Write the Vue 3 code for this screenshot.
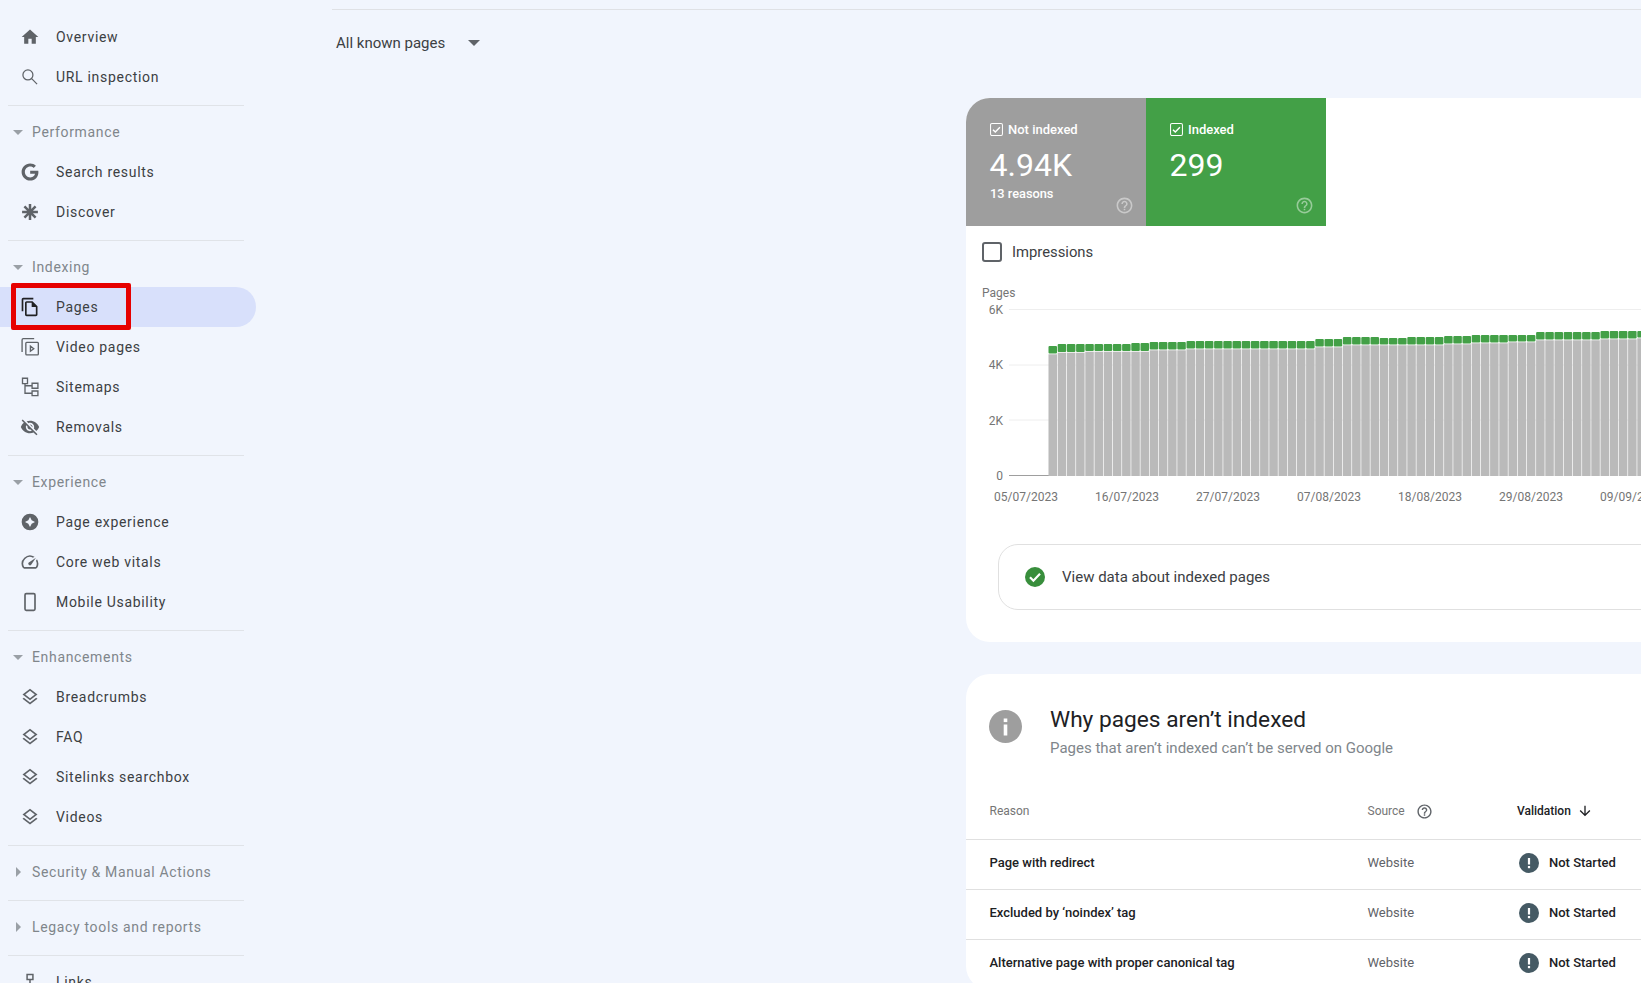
<script setup>
// icon paths, all on a 24x24 grid unless `box` says otherwise
const icons = {
  home: { d: 'M10 20v-6h4v6h5v-8h3L12 3 2 12h3v8z' },
  search: { stroke: 1.5, d: 'M9.500 3.500a6 6 0 1 0 0 12 6 6 0 0 0 0-12zM14 14l6.500 6.500' },
  google: { box: '-2 -2 28 28', d: 'M12.24 10.285V14.4h6.806c-.275 1.765-2.056 5.174-6.806 5.174-4.095 0-7.439-3.389-7.439-7.574s3.345-7.574 7.439-7.574c2.33 0 3.891.989 4.785 1.849l3.254-3.138C18.189 1.186 15.479 0 12.24 0c-6.635 0-12 5.365-12 12s5.365 12 12 12c6.926 0 11.52-4.869 11.52-11.726 0-.788-.085-1.39-.189-1.989H12.24z' },
  discover: { stroke: 3, d: 'M12 2.500v19M2.500 12h19M5.300 5.300l13.400 13.400M18.700 5.300L5.300 18.700' },
  pages: { d: 'M16 1H4c-1.1 0-2 .9-2 2v14h2V3h12V1zm-1 4H8c-1.1 0-1.99.9-1.99 2L6 21c0 1.1.89 2 1.99 2H19c1.1 0 2-.9 2-2V11l-6-6zM8 21V7h6v5h5v9H8z' },
  video: { stroke: 1.6, d: 'M17 2H4a1.500 1.500 0 0 0-1.500 1.500V18M8 6.500h13a1 1 0 0 1 1 1v13a1 1 0 0 1-1 1H8a1 1 0 0 1-1-1v-13a1 1 0 0 1 1-1zM12.500 11v6l4-3z' },
  sitemap: { stroke: 1.6, d: 'M3 1.500h6V8H3zM14.500 7.500h7v6h-7zM14.500 16.800h7v5.500h-7zM6 8v11.500h8.500M6 10.500h8.500' },
  removal: { d: 'M12 7c2.76 0 5 2.24 5 5 0 .65-.13 1.26-.36 1.83l2.92 2.92c1.51-1.26 2.7-2.89 3.43-4.75-1.73-4.39-6-7.5-11-7.5-1.4 0-2.74.25-3.98.7l2.16 2.16C10.74 7.13 11.35 7 12 7zM2 4.27l2.28 2.28.46.46C3.08 8.3 1.78 10.02 1 12c1.73 4.39 6 7.5 11 7.5 1.55 0 3.03-.3 4.38-.84l.42.42L19.73 22 21 20.73 3.27 3 2 4.27zM7.53 9.8l1.55 1.55c-.05.21-.08.43-.08.65 0 1.66 1.34 3 3 3 .22 0 .44-.03.65-.08l1.55 1.55c-.67.33-1.41.53-2.2.53-2.76 0-5-2.24-5-5 0-.79.2-1.53.53-2.2zm4.31-.78l3.15 3.15.02-.16c0-1.66-1.34-3-3-3l-.17.01z' },
  experience: { evenodd: true, d: 'M12 2a10 10 0 1 0 0 20 10 10 0 0 0 0-20zm0 4l2 4 4 2-4 2-2 4-2-4-4-2 4-2z' },
  vitals: { d: 'M20.38 8.57l-1.23 1.85a8 8 0 0 1-.22 7.58H5.07A8 8 0 0 1 15.58 6.85l1.85-1.23A10 10 0 0 0 3.35 19a2 2 0 0 0 1.72 1h13.85a2 2 0 0 0 1.74-1 10 10 0 0 0-.27-10.44zm-9.79 6.84a2 2 0 0 0 2.83 0l5.66-8.49-8.49 5.66a2 2 0 0 0 0 2.83z' },
  mobile: { stroke: 2, d: 'M7.500 2h9a1.500 1.500 0 0 1 1.500 1.500v17a1.500 1.500 0 0 1-1.500 1.500h-9A1.500 1.500 0 0 1 6 20.500v-17A1.500 1.500 0 0 1 7.500 2z' },
  layers: { d: 'M11.99 18.54l-7.37-5.73L3 14.07l9 7 9-7-1.63-1.27zM12 16l7.36-5.73L21 9l-9-7-9 7 1.63 1.27L12 16zm0-11.47L17.74 9 12 13.47 6.26 9 12 4.53z' },
  links: { stroke: 1.8, d: 'M8.500 3h7v6h-7zM12 9v8M8 15l4 3 4-3' },
}

const help = 'M11 18h2v-2h-2v2zm1-16C6.48 2 2 6.48 2 12s4.48 10 10 10 10-4.48 10-10S17.52 2 12 2zm0 18c-4.41 0-8-3.59-8-8s3.59-8 8-8 8 3.59 8 8-3.59 8-8 8zm0-14c-2.21 0-4 1.79-4 4h2c0-1.1.9-2 2-2s2 .9 2 2c0 2-3 1.75-3 5h2c0-2.25 3-2.5 3-5 0-2.21-1.79-4-4-4z'

const nav = [
  { items: [{ label: 'Overview', icon: 'home' }, { label: 'URL inspection', icon: 'search' }] },
  { title: 'Performance', open: true, items: [{ label: 'Search results', icon: 'google' }, { label: 'Discover', icon: 'discover' }] },
  {
    title: 'Indexing',
    open: true,
    items: [
      { label: 'Pages', icon: 'pages', active: true },
      { label: 'Video pages', icon: 'video' },
      { label: 'Sitemaps', icon: 'sitemap' },
      { label: 'Removals', icon: 'removal' },
    ],
  },
  {
    title: 'Experience',
    open: true,
    items: [
      { label: 'Page experience', icon: 'experience' },
      { label: 'Core web vitals', icon: 'vitals' },
      { label: 'Mobile Usability', icon: 'mobile' },
    ],
  },
  {
    title: 'Enhancements',
    open: true,
    items: [
      { label: 'Breadcrumbs', icon: 'layers' },
      { label: 'FAQ', icon: 'layers' },
      { label: 'Sitelinks searchbox', icon: 'layers' },
      { label: 'Videos', icon: 'layers' },
    ],
  },
  { title: 'Security & Manual Actions', items: [] },
  { title: 'Legacy tools and reports', items: [] },
  { items: [{ label: 'Links', icon: 'links' }] },
]

// chart: bar runs as [count, y of grey top, y of green top], in chart coordinates
const runs = [
  [1, 76.3, 68], [3, 74.7, 66], [5, 73.7, 66], [2, 73.7, 65], [4, 72.3, 64],
  [14, 71.3, 63], [3, 69.3, 61], [4, 67.3, 59], [3, 67.3, 60], [4, 67.3, 59],
  [3, 66.3, 58], [4, 65.3, 57], [3, 64.3, 57], [7, 62.3, 54], [4, 61.3, 53], [1, 60.3, 53],
]
const bars = []
for (const [count, grey, green] of runs) {
  for (let n = 0; n < count; n++) {
    bars.push({ x: 82.5 + bars.length * 9.2, grey, green })
  }
}
const yAxis = [
  { label: '6K', y: 31.5, text: 35.5 },
  { label: '4K', y: 87, text: 91 },
  { label: '2K', y: 142, text: 147 },
]
const dates = ['05/07/2023', '16/07/2023', '27/07/2023', '07/08/2023', '18/08/2023', '29/08/2023', '09/09/2023']

const rows = ['Page with redirect', "Excluded by ‘noindex’ tag", 'Alternative page with proper canonical tag']
</script>

<template>
  <div class="app">
    <aside class="sidebar">
      <section v-for="(group, g) in nav" :key="g" class="group">
        <div v-if="group.title" class="group-title">
          <span :class="group.open ? 'caret-down' : 'caret-right'"></span>
          {{ group.title }}
        </div>
        <a v-for="item in group.items" :key="item.label" class="item" :class="{ active: item.active }">
          <svg class="item-icon" :viewBox="icons[item.icon].box || '0 0 24 24'">
            <path
              :d="icons[item.icon].d"
              :fill="icons[item.icon].stroke ? 'none' : 'currentColor'"
              :stroke="icons[item.icon].stroke ? 'currentColor' : 'none'"
              :stroke-width="icons[item.icon].stroke"
              :fill-rule="icons[item.icon].evenodd ? 'evenodd' : 'nonzero'"
            />
          </svg>
          <span>{{ item.label }}</span>
          <i v-if="item.active" class="red-box"></i>
        </a>
      </section>
    </aside>

    <main class="main">
      <div class="top-line"></div>
      <div class="filter">
        <span>All known pages</span>
        <span class="filter-caret"></span>
      </div>

      <div class="card chart-card">
        <div class="tiles">
          <div class="tile grey">
            <div class="tile-label">
              <svg viewBox="0 0 14 14" class="tile-check">
                <rect x="0.6" y="0.6" width="12.800" height="12.800" rx="1.500" fill="none" stroke="#fff" stroke-width="1.100" />
                <path d="M3.200 7.200l2.500 2.500 5-5.200" fill="none" stroke="#fff" stroke-width="1.500" />
              </svg>
              Not indexed
            </div>
            <div class="tile-value">4.94K</div>
            <div class="tile-sub">13 reasons</div>
            <svg class="tile-help" viewBox="0 0 24 24"><path :d="help" fill="#fff" /></svg>
          </div>
          <div class="tile green">
            <div class="tile-label">
              <svg viewBox="0 0 14 14" class="tile-check">
                <rect x="0.6" y="0.6" width="12.800" height="12.800" rx="1.500" fill="none" stroke="#fff" stroke-width="1.100" />
                <path d="M3.200 7.200l2.500 2.500 5-5.200" fill="none" stroke="#fff" stroke-width="1.500" />
              </svg>
              Indexed
            </div>
            <div class="tile-value">299</div>
            <svg class="tile-help" viewBox="0 0 24 24"><path :d="help" fill="#fff" /></svg>
          </div>
        </div>

        <label class="impressions">
          <span class="box"></span>
          Impressions
        </label>

        <svg class="chart" width="700" height="235" viewBox="0 0 700 235">
          <text x="16" y="19" class="axis">Pages</text>
          <g v-for="tick in yAxis" :key="tick.label">
            <line x1="43" x2="700" :y1="tick.y" :y2="tick.y" stroke="#eeeeee" />
            <text x="37" :y="tick.text" text-anchor="end" class="axis">{{ tick.label }}</text>
          </g>
          <line x1="43" x2="83" y1="197.5" y2="197.5" stroke="#9e9e9e" />
          <text x="37" y="202" text-anchor="end" class="axis">0</text>
          <g v-for="bar in bars" :key="bar.x">
            <rect :x="bar.x" :y="bar.green" width="8.500" :height="bar.grey - bar.green - 0.7" rx="1" fill="#43a047" />
            <rect :x="bar.x" :y="bar.grey" width="8.500" :height="198 - bar.grey" fill="#bababa" />
          </g>
          <text v-for="(date, i) in dates" :key="date" :x="60 + i * 101" y="223" text-anchor="middle" class="axis">{{ date }}</text>
        </svg>

        <div class="view-data">
          <svg class="ok-icon" viewBox="0 0 20 20">
            <circle cx="10" cy="10" r="10" fill="#388e3c" />
            <path d="M5 10.300l3.400 3.400 6.600-7" fill="none" stroke="#fff" stroke-width="2.200" />
          </svg>
          <span>View data about indexed pages</span>
        </div>
      </div>

      <div class="card reasons-card">
        <div class="reasons-head">
          <svg class="info-icon" viewBox="0 0 33 33">
            <circle cx="16.500" cy="16.500" r="16.500" fill="#9e9e9e" />
            <rect x="14.700" y="14.500" width="3.600" height="11" fill="#fff" />
            <rect x="14.700" y="8.500" width="3.600" height="3.600" fill="#fff" />
          </svg>
          <div>
            <h2>Why pages aren’t indexed</h2>
            <p>Pages that aren’t indexed can’t be served on Google</p>
          </div>
        </div>

        <div class="row head">
          <span>Reason</span>
          <span class="source">
            Source
            <svg viewBox="0 0 24 24" class="source-help"><path :d="help" fill="#5f6368" /></svg>
          </span>
          <span class="validation">
            Validation
            <svg viewBox="0 0 24 24" class="sort-arrow"><path d="M20 12l-1.410-1.410L13 16.170V4h-2v12.170l-5.580-5.590L4 12l8 8z" fill="#202124" /></svg>
          </span>
        </div>
        <div v-for="reason in rows" :key="reason" class="row body">
          <span class="reason">{{ reason }}</span>
          <span class="site">Website</span>
          <span class="status">
            <svg class="status-icon" viewBox="0 0 20 20">
              <circle cx="10" cy="10" r="10" fill="#455a64" />
              <rect x="8.900" y="5" width="2.200" height="6.500" fill="#fff" />
              <rect x="8.900" y="13" width="2.200" height="2.200" fill="#fff" />
            </svg>
            Not Started
          </span>
        </div>
      </div>
    </main>
  </div>
</template>

<style>
html, body {
  margin: 0;
  overflow: hidden;
}
</style>

<style scoped>
.app {
  display: flex;
  height: 983px;
  overflow: hidden;
  background: #f1f5fd;
  font-family: Roboto, "Liberation Sans", sans-serif;
  color: #202124;
}

/* sidebar */
.sidebar {
  flex: 0 0 256px;
  padding-top: 17px;
}

.group + .group::before {
  content: '';
  display: block;
  width: 236px;
  height: 1px;
  margin: 8px 0 6px 8px;
  background: #e0e3e8;
}

.group-title {
  display: flex;
  align-items: center;
  height: 40px;
  padding-left: 32px;
  position: relative;
  font-size: 14px;
  letter-spacing: 0.66px;
  color: #80868b;
}

.caret-down {
  position: absolute;
  left: 13px;
  top: 18px;
  border-left: 5px solid transparent;
  border-right: 5px solid transparent;
  border-top: 5px solid #9aa0a6;
}

.caret-right {
  position: absolute;
  left: 16px;
  top: 15px;
  border-top: 5px solid transparent;
  border-bottom: 5px solid transparent;
  border-left: 5px solid #9aa0a6;
}

.item {
  display: flex;
  align-items: center;
  height: 40px;
  position: relative;
  padding-left: 20px;
  font-size: 14px;
  letter-spacing: 0.7px;
  color: #3c4043;
}

.item.active {
  background: #d8e0fb;
  border-radius: 0 20px 20px 0;
}

.item-icon {
  width: 20px;
  height: 20px;
  margin-right: 16px;
  color: #5f6368;
}

.item.active .item-icon {
  color: #202124;
}

.red-box {
  position: absolute;
  left: 11px;
  top: -4px;
  width: 120px;
  height: 47px;
  box-sizing: border-box;
  border: 5px solid #e60000;
  border-radius: 2px;
}

/* main column */
.main {
  flex: 1;
  min-width: 0;
  padding-top: 9px;
}

.top-line {
  height: 1px;
  margin-left: 76px;
  background: #dfe1e5;
}

.filter {
  display: flex;
  align-items: center;
  height: 20px;
  margin: 23px 0 0 80px;
  font-size: 15px;
  color: #3c4043;
}

.filter-caret {
  margin-left: 23px;
  border-left: 6px solid transparent;
  border-right: 6px solid transparent;
  border-top: 6px solid #5f6368;
}

.card {
  width: 1000px;
  margin-left: 710px;
  background: #fff;
  border-radius: 24px;
}

.chart-card {
  margin-top: 45px;
  padding-bottom: 32px;
  overflow: hidden;
}

.tiles {
  display: flex;
}

.tile {
  position: relative;
  box-sizing: border-box;
  width: 180px;
  height: 128px;
  padding: 22px 0 0 24px;
  color: #fff;
}

.tile.grey {
  background: #9e9e9e;
}

.tile.green {
  background: #43a047;
}

.tile-label {
  display: flex;
  align-items: center;
  gap: 5px;
  height: 19px;
  font-size: 13px;
  font-weight: 500;
}

.tile-check {
  width: 13px;
  height: 13px;
}

.tile-value {
  margin-top: 8px;
  font-size: 32px;
  line-height: 36px;
  margin-left: -0.5px;
}

.tile-sub {
  margin-top: 3px;
  font-size: 12.800px;
  font-weight: 500;
  line-height: 16px;
}

.tile-help {
  position: absolute;
  right: 12px;
  bottom: 11px;
  width: 19px;
  height: 19px;
  opacity: 0.45;
}

.impressions {
  display: flex;
  align-items: center;
  height: 52px;
  padding-left: 16px;
  font-size: 14.800px;
  color: #3c4043;
}

.box {
  width: 16px;
  height: 16px;
  margin-right: 10px;
  border: 2px solid #5f6368;
  border-radius: 3px;
}

.chart {
  display: block;
}

.axis {
  font-size: 12px;
  fill: #757575;
}

.view-data {
  display: flex;
  align-items: center;
  box-sizing: border-box;
  height: 66px;
  margin: 31px 0 0 32px;
  padding-left: 26px;
  border: 1px solid #e0e0e0;
  border-radius: 20px;
  font-size: 15px;
  color: #3c4043;
}

.ok-icon {
  width: 20px;
  height: 20px;
  margin-right: 17px;
}

.reasons-card {
  margin-top: 32px;
  padding-top: 32px;
}

.reasons-head {
  display: flex;
  align-items: flex-start;
  padding-left: 23px;
  margin-bottom: 25px;
}

.info-icon {
  width: 33px;
  height: 33px;
  margin: 4px 28px 0 0;
}

h2 {
  margin: 0 0 4px;
  font-size: 22.700px;
  font-weight: 400;
  line-height: 28px;
  color: #202124;
}

p {
  margin: 0;
  font-size: 15px;
  line-height: 20px;
  color: #80868b;
}

.row {
  display: grid;
  grid-template-columns: 378px 149.500px 1fr;
  align-items: center;
  box-sizing: border-box;
  height: 50px;
  padding-left: 23.500px;
  border-bottom: 1px solid #e0e0e0;
  font-size: 12px;
  color: #5f6368;
}

.row.head {
  height: 57px;
  color: #757575;
}

.row.body {
  padding-bottom: 4px;
  font-size: 13px;
}

.source {
  display: flex;
  align-items: center;
  gap: 11px;
}

.source-help {
  width: 17px;
  height: 17px;
}

.validation {
  display: flex;
  align-items: center;
  gap: 6px;
  color: #202124;
  font-weight: 500;
}

.sort-arrow {
  width: 16px;
  height: 16px;
}

.reason {
  font-weight: 500;
  color: #202124;
}

.status {
  display: flex;
  align-items: center;
  gap: 10px;
  font-weight: 500;
  color: #202124;
}

.status-icon {
  width: 20px;
  height: 20px;
  margin-left: 2px;
}
</style>
